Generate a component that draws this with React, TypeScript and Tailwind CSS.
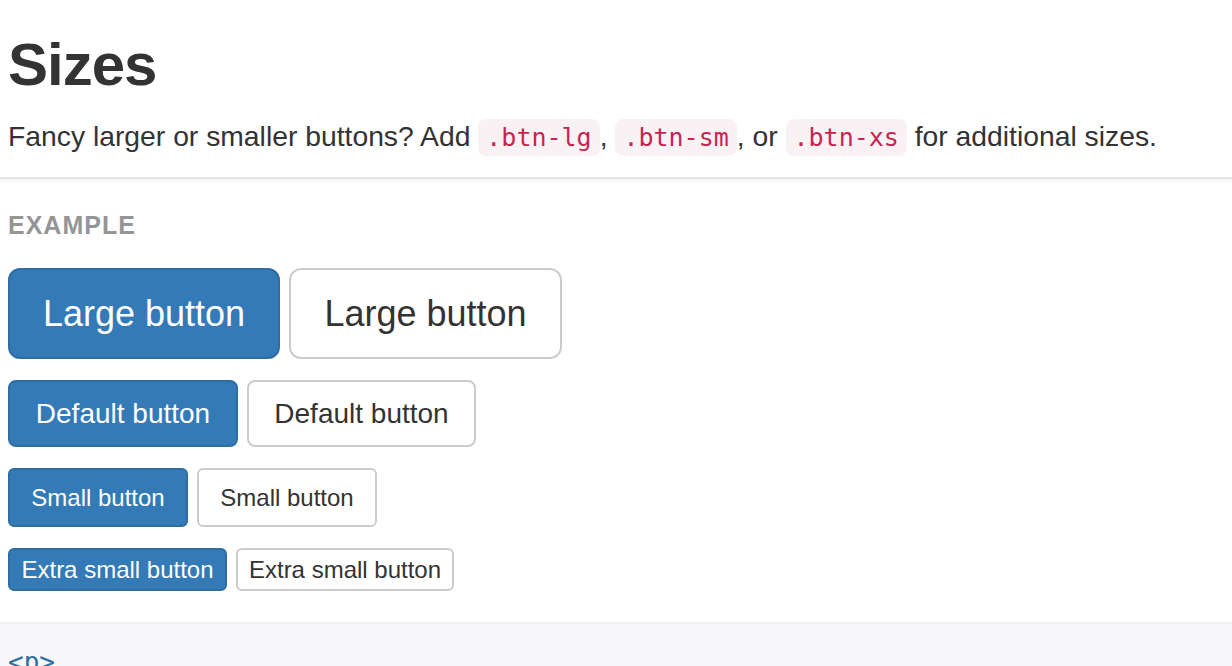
import React from 'react';

const sans = { fontFamily: '"Liberation Sans", Arial, sans-serif' };
const mono = { fontFamily: '"DejaVu Sans Mono", "Liberation Mono", monospace' };

type Row = {
  height: string;
  text: string;
  font: string;
  radius: string;
  blueWidth: string;
  whiteWidth: string;
};

const rows: Row[] = [
  { height: 'h-[91px]', text: 'Large button', font: 'text-[36px]', radius: 'rounded-[12px]', blueWidth: 'w-[272px]', whiteWidth: 'w-[273px]' },
  { height: 'h-[67px]', text: 'Default button', font: 'text-[28px]', radius: 'rounded-[8px]', blueWidth: 'w-[230px]', whiteWidth: 'w-[229px]' },
  { height: 'h-[59px]', text: 'Small button', font: 'text-[24px]', radius: 'rounded-[6px]', blueWidth: 'w-[180px]', whiteWidth: 'w-[180px]' },
  { height: 'h-[43px]', text: 'Extra small button', font: 'text-[24px]', radius: 'rounded-[6px]', blueWidth: 'w-[219px]', whiteWidth: 'w-[218px]' },
];

const Code: React.FC<{ children: React.ReactNode }> = ({ children }) => (
  <code
    className="rounded-[8px] bg-[#f9f2f4] px-[8px] py-[4px] text-[25px] text-[#c7254e]"
    style={mono}
  >
    {children}
  </code>
);

export default function App() {
  return (
    <div className="h-[666px] overflow-hidden bg-white text-[#333]" style={sans}>
      <div className="px-[8px] pt-[32px]">
        <h2 className="text-[60px] font-bold leading-[66px] tracking-[-1px]">Sizes</h2>
        <p className="mt-[18px] text-[28.3px] leading-[40px]">
          Fancy larger or smaller buttons? Add <Code>.btn-lg</Code>, <Code>.btn-sm</Code>, or{' '}
          <Code>.btn-xs</Code> for additional sizes.
        </p>
      </div>

      <div className="mt-[19px] border-t-2 border-b-2 border-t-[#e5e5e5] border-b-[#efefef] bg-white px-[8px] pb-[31px] pt-[34px] shadow-[inset_0_7px_6px_-6px_rgba(0,0,0,0.08)]">
        <div className="text-[25px] font-bold uppercase leading-[25px] tracking-[1px] text-[#959595]">
          Example
        </div>
        <div className="mt-[30px] flex flex-col gap-[21px]">
          {rows.map((r) => (
            <div key={r.text} className="flex gap-[9px]">
              <button
                className={`${r.height} ${r.blueWidth} ${r.font} ${r.radius} flex items-center justify-center border-2 border-[#2e6da4] bg-[#337ab7] text-white`}
              >
                {r.text}
              </button>
              <button
                className={`${r.height} ${r.whiteWidth} ${r.font} ${r.radius} flex items-center justify-center border-2 border-[#ccc] bg-white text-[#333]`}
              >
                {r.text}
              </button>
            </div>
          ))}
        </div>
      </div>

      <div className="bg-[#f7f7f9] px-[8px] pt-[20px] pb-[20px]">
        <pre className="text-[26px] leading-[36px] text-[#2f6f9f]" style={mono}>
          {'<p>'}
        </pre>
      </div>
    </div>
  );
}
